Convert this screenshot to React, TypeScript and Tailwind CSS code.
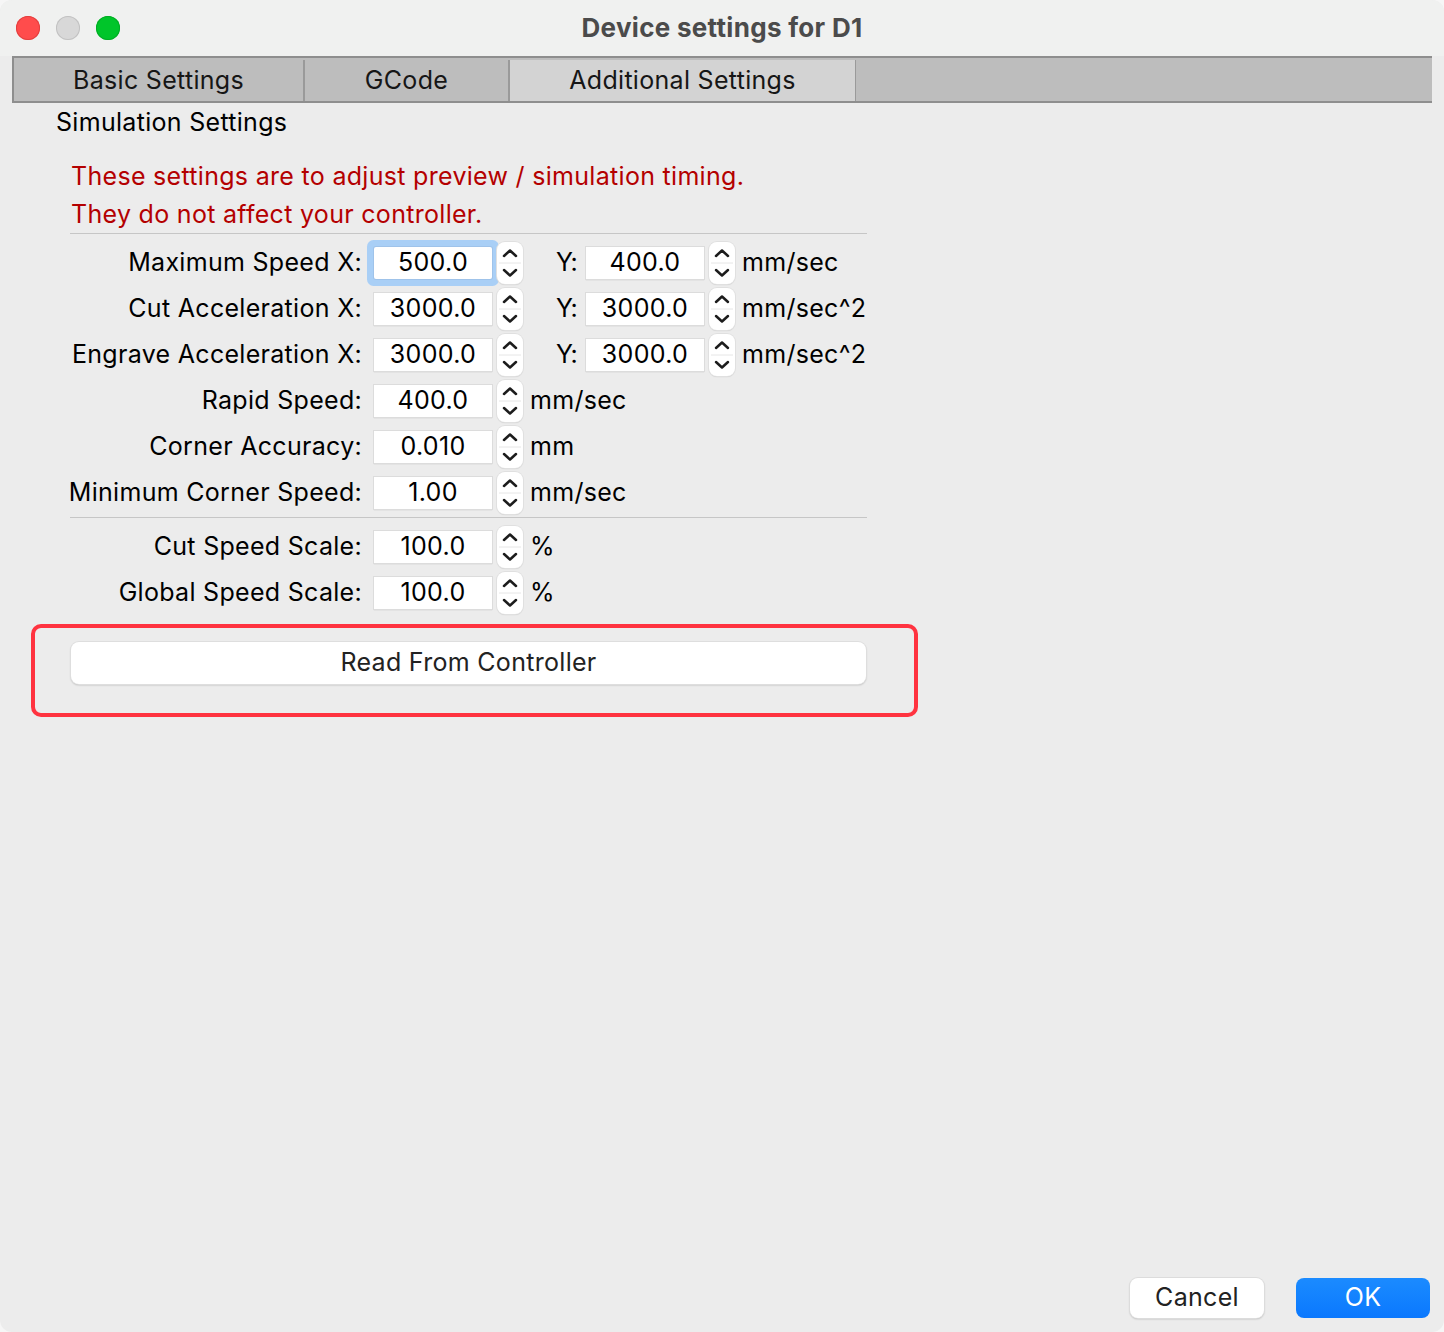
const rows1 = [
  { label: "Maximum Speed X:", x: "500.0", y: "400.0", unit: "mm/sec", focus: true },
  { label: "Cut Acceleration X:", x: "3000.0", y: "3000.0", unit: "mm/sec^2" },
  { label: "Engrave Acceleration X:", x: "3000.0", y: "3000.0", unit: "mm/sec^2" },
];

const rows2 = [
  { label: "Rapid Speed:", value: "400.0", unit: "mm/sec" },
  { label: "Corner Accuracy:", value: "0.010", unit: "mm" },
  { label: "Minimum Corner Speed:", value: "1.00", unit: "mm/sec" },
];

const rows3 = [
  { label: "Cut Speed Scale:", value: "100.0", unit: "%" },
  { label: "Global Speed Scale:", value: "100.0", unit: "%" },
];

function Spinner() {
  return (
    <div className="ml-[5px] h-[42px] w-[26px] shrink-0 rounded-[8px] bg-white shadow-[0_0_0_1px_#e0e0e0,0_1px_1px_#c4c4c4]">
      <svg width="26" height="42" viewBox="0 0 26 42">
        <path d="M7 14 L13 8.5 L19 14" fill="none" stroke="#1c1c1c" strokeWidth="2.5" strokeLinecap="round" strokeLinejoin="round" />
        <line x1="2" y1="21" x2="24" y2="21" stroke="#e6e6e6" strokeWidth="1" />
        <path d="M7 28 L13 33.5 L19 28" fill="none" stroke="#1c1c1c" strokeWidth="2.5" strokeLinecap="round" strokeLinejoin="round" />
      </svg>
    </div>
  );
}

function NumField({ value, focus }: { value: string; focus?: boolean }) {
  return (
    <div
      className={
        focus
          ? "flex h-[32px] w-[118px] shrink-0 items-center justify-center rounded-[2px] bg-white text-black shadow-[0_0_0_1px_#9fc3ea,0_0_0_7px_#a9cff6]"
          : "flex h-[32px] w-[118px] shrink-0 items-center justify-center bg-white text-black shadow-[0_0_0_1px_#dcdcdc,0_1px_1px_#b9b9b9]"
      }
    >
      {value}
    </div>
  );
}

function Label({ text }: { text: string }) {
  return (
    <div className="flex w-[293px] shrink-0 justify-end whitespace-nowrap pr-[1px] text-black">
      <span>{text}</span>
    </div>
  );
}

export default function App() {
  return (
    <div className="h-[1332px] w-[1444px] bg-[#f6f6f6] text-[25px] tracking-[0.3px] [font-family:Inter,'Noto_Sans',sans-serif]">
      <div className="flex h-full w-full flex-col overflow-hidden rounded-[12px] bg-[#ececec]">
        {/* title bar */}
        <div className="relative flex h-[56px] shrink-0 items-center justify-center bg-[#f0f1f0] pb-[2px]">
          <div className="absolute left-[16px] top-[16px] flex gap-[16px]">
            <span className="h-[24px] w-[24px] rounded-full bg-[#ff4c4c] shadow-[inset_0_0_0_1px_#e2403f]" />
            <span className="h-[24px] w-[24px] rounded-full bg-[#d8d8d8] shadow-[inset_0_0_0_1px_#c2c2c2]" />
            <span className="h-[24px] w-[24px] rounded-full bg-[#00c52a] shadow-[inset_0_0_0_1px_#00ad24]" />
          </div>
          <span className="text-[26px] font-bold tracking-[0.3px] text-[#4b4b4b]">Device settings for D1</span>
        </div>

        {/* tabs */}
        <div className="ml-[12px] flex h-[47px] w-[1420px] shrink-0 border-b-2 border-l-2 border-t-2 border-[#8e8e8e] bg-[#bdbdbd] pt-[2px] text-[#161616]">
          <div className="flex w-[291px] items-center justify-center border-r-2 border-[#9a9a9a]">Basic Settings</div>
          <div className="flex w-[205px] items-center justify-center border-r-2 border-[#9a9a9a]">GCode</div>
          <div className="flex w-[346px] items-center justify-center border-r border-[#9a9a9a] bg-[#d3d3d3]">Additional Settings</div>
          <div className="flex-1" />
        </div>

        {/* content */}
        <div className="flex flex-1 flex-col">
          <div className="ml-[56px] mt-[1px] leading-[36px] text-black">Simulation Settings</div>

          <div className="ml-[70px] mt-[17px] w-[797px]">
            <div className="pl-[1px] leading-[38px] text-[#b40000]">
              <div>These settings are to adjust preview / simulation timing.</div>
              <div>They do not affect your controller.</div>
            </div>
            <div className="h-[1px] bg-[#c6c6c6]" />

            <div className="mt-[6px] flex flex-col">
              {rows1.map((r) => (
                <div key={r.label} className="flex h-[46px] items-center">
                  <Label text={r.label} />
                  <div className="ml-[11px]">
                    <NumField value={r.x} focus={r.focus} />
                  </div>
                  <Spinner />
                  <div className="ml-[33px] w-[30px] tracking-[-1px] text-black">Y:</div>
                  <NumField value={r.y} />
                  <Spinner />
                  <div className="ml-[7px] text-black">{r.unit}</div>
                </div>
              ))}
              {rows2.map((r) => (
                <div key={r.label} className="flex h-[46px] items-center">
                  <Label text={r.label} />
                  <div className="ml-[11px]">
                    <NumField value={r.value} />
                  </div>
                  <Spinner />
                  <div className="ml-[7px] text-black">{r.unit}</div>
                </div>
              ))}
            </div>

            <div className="mt-[1px] h-[1px] bg-[#c6c6c6]" />

            <div className="mt-[6px] flex flex-col">
              {rows3.map((r) => (
                <div key={r.label} className="flex h-[46px] items-center">
                  <Label text={r.label} />
                  <div className="ml-[11px]">
                    <NumField value={r.value} />
                  </div>
                  <Spinner />
                  <div className="ml-[7px] text-black">{r.unit}</div>
                </div>
              ))}
            </div>
          </div>

          {/* highlighted button */}
          <div className="ml-[31px] mt-[8px] w-[887px] rounded-[10px] border-4 border-[#ff3340] pb-[29px] pl-[36px] pt-[14px]">
            <button className="flex h-[42px] w-[795px] items-center justify-center rounded-[8px] bg-white text-[#222] shadow-[0_0_0_1px_#dedede,0_1px_2px_rgba(0,0,0,0.3)]">
              Read From Controller
            </button>
          </div>

          <div className="flex-1" />

          {/* footer */}
          <div className="flex justify-end gap-[32px] pb-[14px] pr-[14px]">
            <button className="flex h-[40px] w-[134px] items-center justify-center rounded-[8px] bg-white text-[#222] shadow-[0_0_0_1px_#dcdcdc,0_1px_2px_rgba(0,0,0,0.3)]">
              Cancel
            </button>
            <button className="flex h-[40px] w-[134px] items-center justify-center rounded-[8px] bg-gradient-to-b from-[#1b8bff] to-[#0a78fe] text-white">
              OK
            </button>
          </div>
        </div>
      </div>
    </div>
  );
}
